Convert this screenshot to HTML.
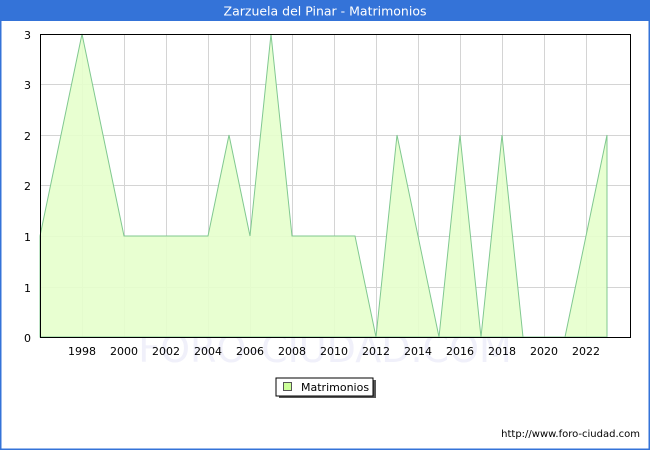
<!DOCTYPE html>
<html><head><style>
body{margin:0;width:650px;height:450px;overflow:hidden;font-family:"DejaVu Sans","Liberation Sans",sans-serif;}
</style></head><body>
<svg width="650" height="450" xmlns="http://www.w3.org/2000/svg" font-family="DejaVu Sans, Liberation Sans, sans-serif">
<rect x="0" y="0" width="650" height="450" fill="#fff"/>
<rect x="0.5" y="0.5" width="649" height="449" fill="none" stroke="#3473d8" stroke-width="2"/>
<rect x="0" y="0" width="650" height="21" fill="#3473d8"/>
<text x="325" y="15.5" fill="#fff" font-size="12.5" text-anchor="middle">Zarzuela del Pinar - Matrimonios</text>
<text x="325" y="362" fill="#f0f0fa" font-size="38" text-anchor="middle">FORO-CIUDAD.COM</text>
<g stroke="#d4d4d4" stroke-width="1">
<line x1="40" y1="84.5" x2="630" y2="84.5"/><line x1="40" y1="135.5" x2="630" y2="135.5"/><line x1="40" y1="185.5" x2="630" y2="185.5"/><line x1="40" y1="236.5" x2="630" y2="236.5"/><line x1="40" y1="287.5" x2="630" y2="287.5"/>
<line x1="82.5" y1="34" x2="82.5" y2="337"/><line x1="124.5" y1="34" x2="124.5" y2="337"/><line x1="166.5" y1="34" x2="166.5" y2="337"/><line x1="208.5" y1="34" x2="208.5" y2="337"/><line x1="250.5" y1="34" x2="250.5" y2="337"/><line x1="292.5" y1="34" x2="292.5" y2="337"/><line x1="334.5" y1="34" x2="334.5" y2="337"/><line x1="376.5" y1="34" x2="376.5" y2="337"/><line x1="418.5" y1="34" x2="418.5" y2="337"/><line x1="460.5" y1="34" x2="460.5" y2="337"/><line x1="502.5" y1="34" x2="502.5" y2="337"/><line x1="544.5" y1="34" x2="544.5" y2="337"/><line x1="586.5" y1="34" x2="586.5" y2="337"/>
</g>
<polygon fill="#e6ffcc" fill-opacity="0.9" stroke="#80c890" stroke-width="1" points="40,337 40,236 61,135 82,34 103,135 124,236 145,236 166,236 187,236 208,236 229,135 250,236 271,34 292,236 313,236 334,236 355,236 376,337 397,135 418,236 439,337 460,135 481,337 502,135 523,337 544,337 565,337 586,236 607,135 607,337"/>
<rect x="40.5" y="34.5" width="590" height="303" fill="none" stroke="#000" stroke-width="1"/>
<g font-size="11" fill="#000" text-anchor="end">
<text x="31" y="39">3</text><text x="31" y="89">3</text><text x="31" y="140">2</text><text x="31" y="190">2</text><text x="31" y="241">1</text><text x="31" y="292">1</text><text x="31" y="342">0</text>
</g>
<g font-size="11" fill="#000" text-anchor="middle">
<text x="82" y="355">1998</text><text x="124" y="355">2000</text><text x="166" y="355">2002</text><text x="208" y="355">2004</text><text x="250" y="355">2006</text><text x="292" y="355">2008</text><text x="334" y="355">2010</text><text x="376" y="355">2012</text><text x="418" y="355">2014</text><text x="460" y="355">2016</text><text x="502" y="355">2018</text><text x="544" y="355">2020</text><text x="586" y="355">2022</text>
</g>
<rect x="279" y="380" width="97" height="18" fill="#555"/>
<rect x="276" y="378" width="97" height="18" fill="#fff" stroke="#000" stroke-width="1"/>
<rect x="283.5" y="382.5" width="8" height="8" fill="#ccff99" stroke="#555"/>
<text x="301" y="391" font-size="11">Matrimonios</text>
<text x="640" y="437" font-size="10" text-anchor="end">http://www.foro-ciudad.com</text>
</svg>
</body></html>
